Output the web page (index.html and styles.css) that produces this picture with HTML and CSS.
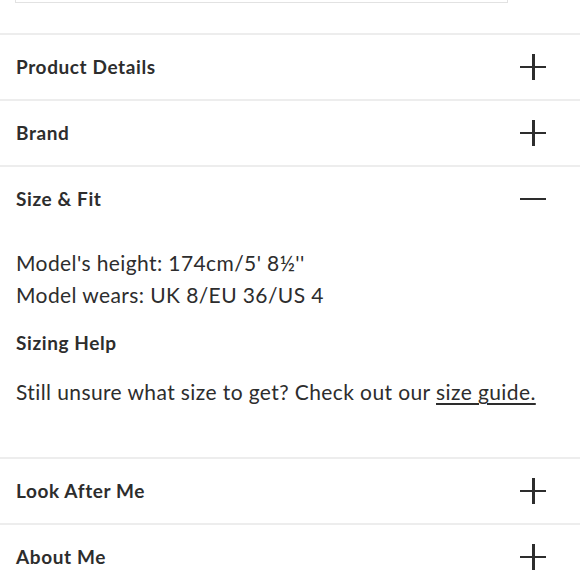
FILE: index.html
```html
<!DOCTYPE html>
<html lang="en">

<head>
  <meta charset="UTF-8" />
  <title>Product accordion</title>
  <link rel="stylesheet" href="styles.css">
</head>

<body>

  <div class="size-select"></div>

  <div class="accordion">
    <div class="item">
      <div class="item-head">
        <h2>Product Details</h2>
        <span class="toggle plus"></span>
      </div>
    </div>

    <div class="item">
      <div class="item-head">
        <h2>Brand</h2>
        <span class="toggle plus"></span>
      </div>
    </div>

    <div class="item open">
      <div class="item-head">
        <h2>Size &amp; Fit</h2>
        <span class="toggle"></span>
      </div>
      <div class="item-body">
        <p>Model's height: 174cm/5' 8½''<br>Model wears: UK 8/EU 36/US 4</p>
        <h3>Sizing Help</h3>
        <p>Still unsure what size to get? Check out our <a href="#">size guide.</a></p>
      </div>
    </div>

    <div class="item">
      <div class="item-head">
        <h2>Look After Me</h2>
        <span class="toggle plus"></span>
      </div>
    </div>

    <div class="item">
      <div class="item-head">
        <h2>About Me</h2>
        <span class="toggle plus"></span>
      </div>
    </div>
  </div>

</body>

</html>
```

FILE: styles.css
```css
body {
  margin: 0;
  font-family: Lato, "Open Sans", sans-serif;
  color: #2d2d2d;
  background: #fff;
}

/* bottom edge of the size dropdown above */
.size-select {
  height: 2px;
  margin: 0 72px 30px 15px;
  border: 1px solid #e2e2e2;
  border-top: none;
}

.item {
  border-top: 2px solid #ededed;
}

.item-head {
  display: flex;
  align-items: center;
  justify-content: space-between;
  height: 63px;
  padding: 0 34px 1px 16px;
}

.item-head h2,
.item-body h3 {
  margin: 0;
  font-size: 19px;
  font-weight: 700;
  letter-spacing: 0.6px;
}

.toggle {
  position: relative;
  width: 26px;
  height: 26px;
}

.toggle::before,
.toggle::after {
  content: "";
  position: absolute;
  background: #2d2d2d;
}

.toggle::before {
  left: 0;
  right: 0;
  top: 12px;
  height: 2.5px;
}

.toggle.plus::after {
  top: 0;
  bottom: 0;
  left: 12px;
  width: 2.5px;
}

.item-body {
  padding: 16px 16px 49px;
}

.item-body p {
  margin: 0;
  font-size: 21px;
  font-weight: 400;
  line-height: 32px;
  letter-spacing: 0.4px;
}

.item-body h3 {
  margin: 20px 0 21px;
  line-height: 24px;
}

.item-body a {
  color: inherit;
  text-underline-offset: 3px;
}
```
